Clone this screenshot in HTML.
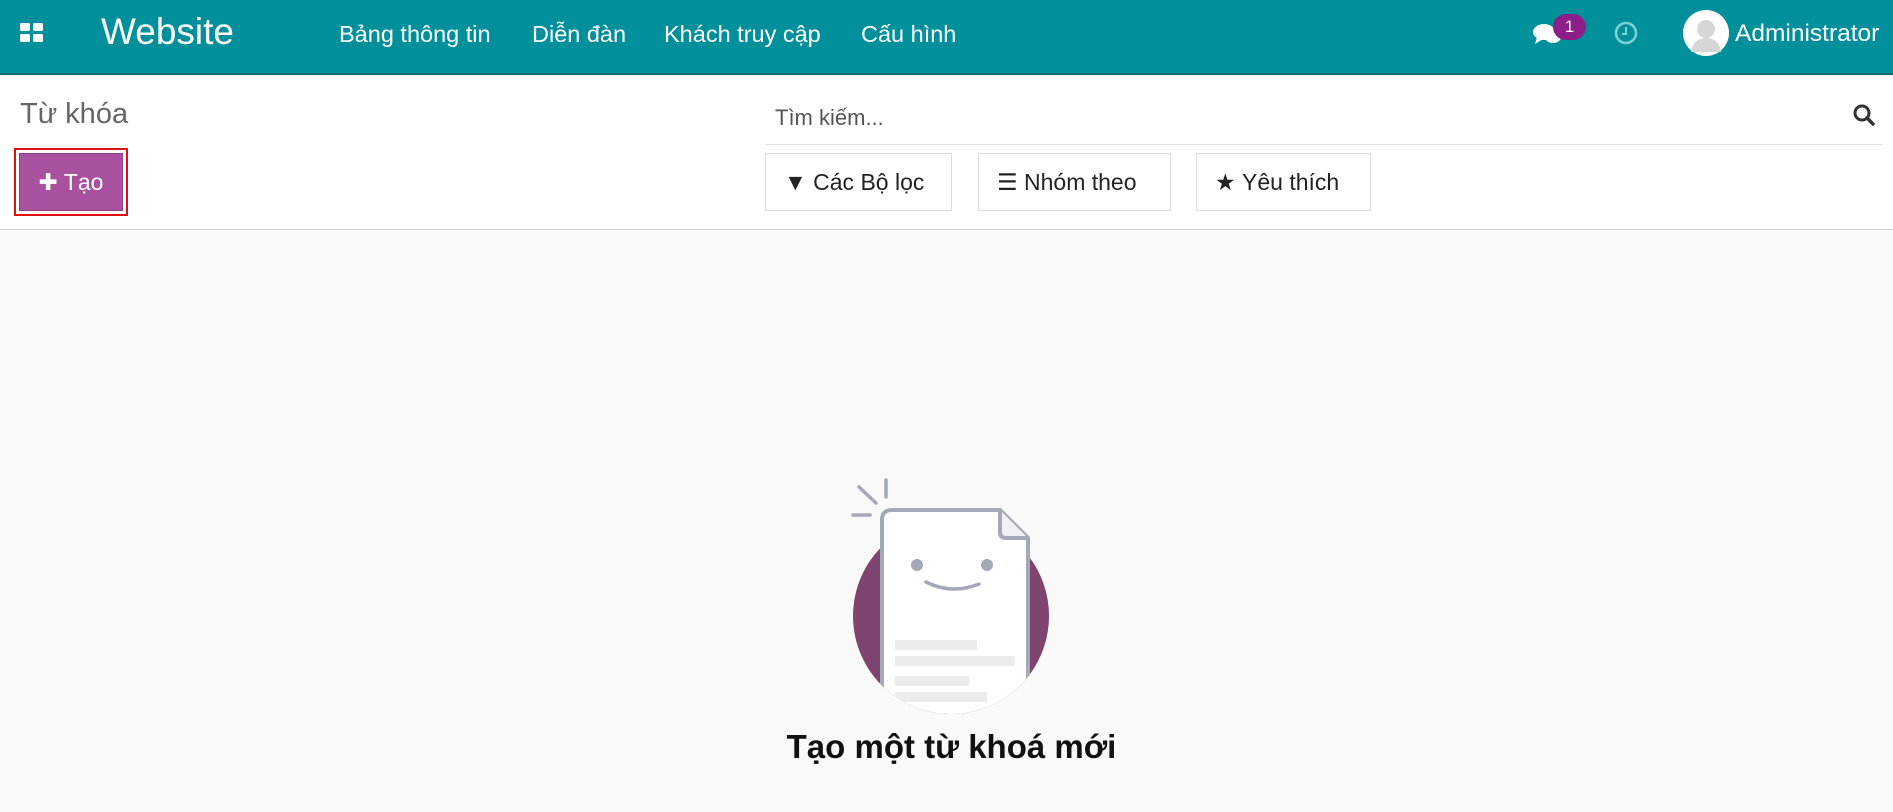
<!DOCTYPE html>
<html><head><meta charset="utf-8"><style>
*{margin:0;padding:0;box-sizing:border-box}
body{width:1893px;height:812px;overflow:hidden;background:#f9f9f9;font-family:"Liberation Sans",sans-serif;position:relative}
.nav{position:absolute;left:0;top:0;width:1893px;height:75px;background:#00909b;border-bottom:2px solid #03656d;color:#fff}
.a{position:absolute}
.nav .i{position:absolute;top:21px;font-size:23.5px}
.hdr{position:absolute;left:0;top:75px;width:1893px;height:155px;background:#fff;border-bottom:1px solid #d3d3d3}
.btn{position:absolute;top:153px;height:58px;border:1px solid #dcdcdc;background:#fff;font-size:23px;color:#222;display:flex;align-items:center;padding-left:18px}
</style></head><body>
<div class="nav">
  <svg class="a" style="left:20px;top:23px" width="24" height="20"><rect x="0" y="0" width="10" height="8" rx="1.5" fill="#fff"/><rect x="13" y="0" width="10" height="8" rx="1.5" fill="#fff"/><rect x="0" y="11" width="10" height="8" rx="1.5" fill="#fff"/><rect x="13" y="11" width="10" height="8" rx="1.5" fill="#fff"/></svg>
  <div class="a" style="left:101px;top:11px;font-size:37px">Website</div>
  <div class="i" style="left:339px">Bảng thông tin</div>
  <div class="i" style="left:532px">Diễn đàn</div>
  <div class="i" style="left:664px">Khách truy cập</div>
  <div class="i" style="left:861px">Cấu hình</div>
  <svg class="a" style="left:1532px;top:20px" width="32" height="28"><ellipse cx="12" cy="12" rx="11" ry="8" fill="#fff"/><path d="M5 17 L3 24 L11 19Z" fill="#fff"/><ellipse cx="21" cy="17" rx="8" ry="6" fill="#fff"/></svg>
  <div class="a" style="left:1553px;top:14px;width:33px;height:26px;border-radius:13px;background:#8c1e8a;font-size:17px;text-align:center;line-height:26px">1</div>
  <svg class="a" style="left:1613px;top:20px" width="26" height="26"><circle cx="13" cy="13" r="10" fill="none" stroke="#7fd0d6" stroke-width="2.5"/><path d="M13 7V14H9" fill="none" stroke="#7fd0d6" stroke-width="2"/></svg>
  <svg class="a" style="left:1683px;top:10px" width="46" height="46"><circle cx="23" cy="23" r="23" fill="#fff"/><circle cx="23" cy="19" r="9" fill="#d6d6d6"/><path d="M8 42 Q10 28 23 28 Q36 28 38 42Z" fill="#d6d6d6"/></svg>
  <div class="a" style="left:1735px;top:20px;font-size:24.5px">Administrator</div>
</div>
<div class="hdr">
  <div class="a" style="left:20px;top:23px;font-size:29px;color:#666">Từ khóa</div>
  <div class="a" style="left:14px;top:73px;width:114px;height:68px;border:2px solid #e01010;padding:3px"><div style="width:100%;height:100%;background:#a7519f;color:#fff;font-size:23px;display:flex;align-items:center;justify-content:center;border:1px solid #8e3d88">✚ Tạo</div></div>
  <div class="a" style="left:775px;top:30px;font-size:22px;color:#555">Tìm kiếm...</div>
  <svg class="a" style="left:1853px;top:29px" width="22" height="22"><circle cx="9" cy="9" r="7" fill="none" stroke="#333" stroke-width="3"/><path d="M14 14L20 20" stroke="#333" stroke-width="3.5" stroke-linecap="round"/></svg>
  <div class="a" style="left:765px;top:69px;width:1118px;height:1px;background:#e2e2e2"></div>
</div>
<div class="btn" style="left:765px;width:187px">▼&nbsp;Các Bộ lọc</div>
<div class="btn" style="left:978px;width:193px">☰&nbsp;Nhóm theo</div>
<div class="btn" style="left:1196px;width:175px">★&nbsp;Yêu thích</div>
<svg class="a" style="left:840px;top:470px" width="230" height="250">
  <defs><clipPath id="c"><circle cx="111" cy="146" r="98"/><rect x="0" y="0" width="230" height="120"/></clipPath></defs>
  <circle cx="111" cy="146" r="98" fill="#7f446f"/>
  <g clip-path="url(#c)">
    <path d="M42 50 Q42 40 52 40 H160 L188 68 V260 H42Z" fill="#fff" stroke="#a3a9b7" stroke-width="4"/>
    <path d="M160 40 V62 Q160 68 166 68 H188" fill="#eef0f4" stroke="#a3a9b7" stroke-width="4"/>
    <rect x="55" y="170" width="82" height="10" fill="#ececec"/><rect x="55" y="186" width="120" height="10" fill="#ececec"/>
    <rect x="55" y="206" width="74" height="10" fill="#ececec"/><rect x="55" y="222" width="92" height="10" fill="#ececec"/>
  </g>
  <circle cx="77" cy="95" r="6" fill="#a3a9b7"/><circle cx="147" cy="95" r="6" fill="#a3a9b7"/>
  <path d="M86 112 Q112 125 139 114" fill="none" stroke="#a3a9b7" stroke-width="3.5" stroke-linecap="round"/>
  <path d="M19 17 L36 33 M46 10 V27 M13 45 H30" stroke="#a3a9b7" stroke-width="3.5" stroke-linecap="round"/>
</svg>
<div class="a" style="left:0;width:1903px;top:728px;text-align:center;font-size:33px;font-weight:bold;color:#111">Tạo một từ khoá mới</div>
</body></html>
